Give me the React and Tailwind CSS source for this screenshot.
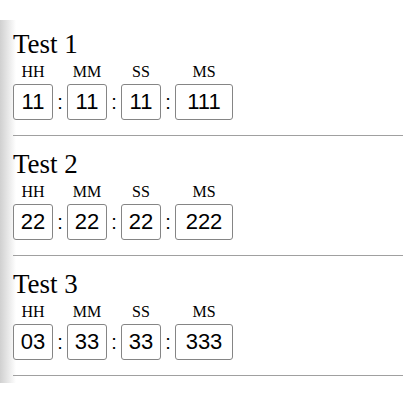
const tests = [
  { name: "Test 1", hh: "11", mm: "11", ss: "11", ms: "111" },
  { name: "Test 2", hh: "22", mm: "22", ss: "22", ms: "222" },
  { name: "Test 3", hh: "03", mm: "33", ss: "33", ms: "333" },
];

function Field({ label, value, wide }) {
  return (
    <div className="flex flex-col items-center">
      <span className="text-[16px] leading-[17px] text-black" style={{ fontFamily: '"Liberation Serif", serif' }}>
        {label}
      </span>
      <input
        readOnly
        value={value}
        className={`${wide ? "w-[58px]" : "w-[40px]"} h-[36px] mt-[4px] rounded-[3px] border border-[#858585] bg-white text-center text-[22px] text-black outline-none`}
        style={{ fontFamily: '"Liberation Sans", Arial, sans-serif' }}
      />
    </div>
  );
}

function Colon() {
  return (
    <span
      className="w-[14px] h-[36px] flex items-center justify-center text-[20px] text-black"
      style={{ fontFamily: '"Liberation Sans", Arial, sans-serif' }}
    >
      :
    </span>
  );
}

function TimerRow({ t }) {
  return (
    <div className="flex flex-col">
      <h2 className="text-[27px] leading-[30px] font-normal text-black" style={{ fontFamily: '"Liberation Serif", serif' }}>
        {t.name}
      </h2>
      <div className="flex items-end mt-[4px]">
        <Field label="HH" value={t.hh} />
        <Colon />
        <Field label="MM" value={t.mm} />
        <Colon />
        <Field label="SS" value={t.ss} />
        <Colon />
        <Field label="MS" value={t.ms} wide />
      </div>
      <hr className="mt-[15px] mb-[13px] border-0 border-t border-[#a0a0a0]" />
    </div>
  );
}

export default function App() {
  return (
    <div className="relative w-[403px] h-[403px] bg-white overflow-hidden">
      <div className="absolute left-0 top-[20px] h-[363px] w-[16px] bg-gradient-to-r from-[#d0d0d0] to-white" />
      <div className="relative pl-[13px] pt-[29px]">
        {tests.map((t) => (
          <TimerRow key={t.name} t={t} />
        ))}
      </div>
    </div>
  );
}
